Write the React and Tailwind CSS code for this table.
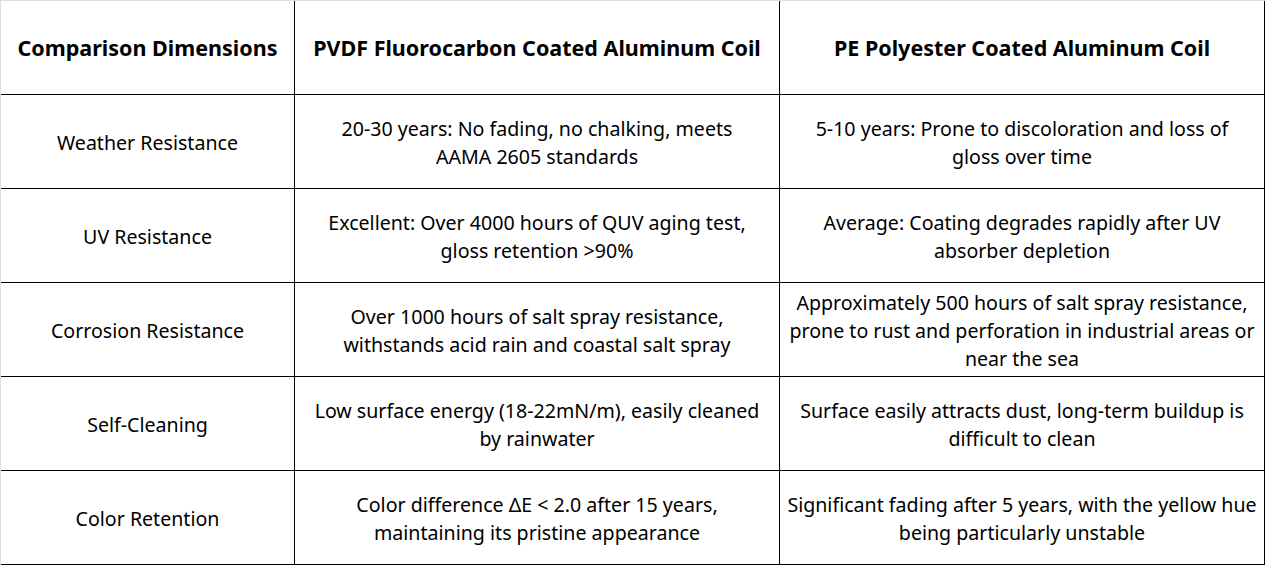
const HEAD = ['Comparison Dimensions', 'PVDF Fluorocarbon Coated Aluminum Coil', 'PE Polyester Coated Aluminum Coil']

// lines are kept as they break in the source table
const ROWS = [
  [
    ['Weather Resistance'],
    ['20-30 years: No fading, no chalking, meets', 'AAMA 2605 standards'],
    ['5-10 years: Prone to discoloration and loss of', 'gloss over time'],
  ],
  [
    ['UV Resistance'],
    ['Excellent: Over 4000 hours of QUV aging test,', 'gloss retention >90%'],
    ['Average: Coating degrades rapidly after UV', 'absorber depletion'],
  ],
  [
    ['Corrosion Resistance'],
    ['Over 1000 hours of salt spray resistance,', 'withstands acid rain and coastal salt spray'],
    [
      'Approximately 500 hours of salt spray resistance,',
      'prone to rust and perforation in industrial areas or',
      'near the sea',
    ],
  ],
  [
    ['Self-Cleaning'],
    ['Low surface energy (18-22mN/m), easily cleaned', 'by rainwater'],
    ['Surface easily attracts dust, long-term buildup is', 'difficult to clean'],
  ],
  [
    ['Color Retention'],
    ['Color difference ΔE < 2.0 after 15 years,', 'maintaining its pristine appearance'],
    ['Significant fading after 5 years, with the yellow hue', 'being particularly unstable'],
  ],
]

const cell = 'flex h-[94px] flex-col items-center justify-center border-r border-b border-black text-center whitespace-nowrap'

export default function App() {
  return (
    <div className="h-[565px] w-[1265px] overflow-hidden border-t border-l border-[#dcdcdc] bg-white font-['Noto_Sans','Liberation_Sans',sans-serif] text-black">
      <div className="grid grid-cols-[294px_485px_485px]">
        {HEAD.map((h) => (
          <div key={h} className={`${cell} pt-[2px] text-[21.5px] font-bold`}>
            {h}
          </div>
        ))}
        {ROWS.map((row) =>
          row.map((lines, i) => (
            <div key={row[0][0] + i} className={`${cell} pt-[2px] text-[19.6px] leading-[28px]`}>
              {lines.map((l) => (
                <span key={l}>{l}</span>
              ))}
            </div>
          )),
        )}
      </div>
    </div>
  )
}
